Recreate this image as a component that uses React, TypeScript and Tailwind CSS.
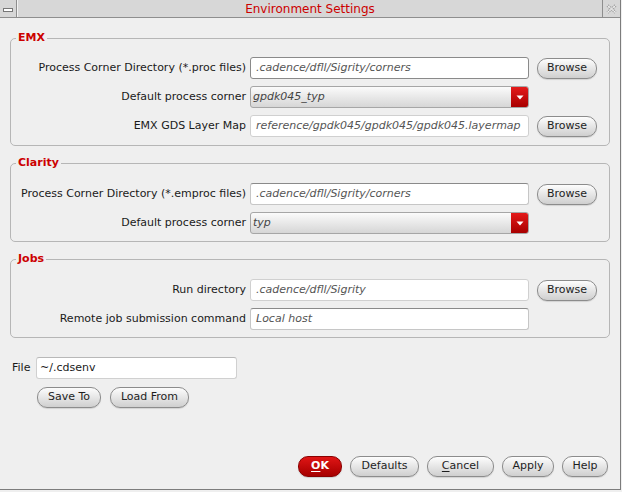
import React from 'react';

type FieldProps = { value: string; tone?: 'dark' | 'light' | 'top' };

function Field({ value, tone = 'light' }: FieldProps) {
  const border =
    tone === 'dark'
      ? 'border-[#8a8a8a]'
      : tone === 'top'
        ? 'border-[#c6c6c6] border-t-[#8a8a8a]'
        : 'border-[#d0d0d0]';
  return (
    <div
      className={`w-[279px] h-[22px] flex items-center bg-white border rounded-[3px] pl-[5px] text-[11px] italic text-[#555] ${border}`}
    >
      {value}
    </div>
  );
}

function Select({ value }: { value: string }) {
  return (
    <div className="w-[279px] h-[22px] flex items-stretch border border-[#a6a6a6] rounded-[3px] bg-linear-to-b from-[#fbfbfb] to-[#d6d6d6] text-[11px] italic text-[#444]">
      <div className="flex-1 flex items-center pl-[2px]">{value}</div>
      <div className="w-[17px] flex items-center justify-center rounded-r-[2px] bg-linear-to-b from-[#e41a1a] to-[#a80000]">
        <svg width="8" height="5" viewBox="0 0 8 5">
          <path d="M0.5 0.5 L7.5 0.5 L4 4.5 Z" fill="#fff" />
        </svg>
      </div>
    </div>
  );
}

function Btn({ children, w }: { children: React.ReactNode; w: string }) {
  return (
    <button
      className={`${w} h-[21px] flex items-center justify-center rounded-[10px] border border-[#8c8c8c] bg-linear-to-b from-[#fdfdfd] to-[#cfcfcf] text-[11px] text-[#1e1e1e] shadow-[0_1px_1px_rgba(0,0,0,0.12)]`}
    >
      {children}
    </button>
  );
}

function Row({ label, children }: { label: string; children: React.ReactNode }) {
  return (
    <div className="flex items-center h-[22px]">
      <div className="w-[239px] pr-[4px] text-right text-[11px] text-[#1a1a1a] whitespace-nowrap">{label}</div>
      {children}
    </div>
  );
}

function Group({ title, pt, pb, mt, children }: { title: string; pt: string; pb: string; mt: string; children: React.ReactNode }) {
  return (
    <fieldset className={`${mt} ${pt} ${pb} border border-[#b6b6b6] rounded-[5px] flex flex-col gap-[7px]`}>
      <legend className="ml-[5px] px-[2px] text-[11px] leading-[14px] font-bold text-[#cc0000]">{title}</legend>
      {children}
    </fieldset>
  );
}

export default function App() {
  return (
    <div className="w-[622px] h-[492px] bg-[#efefef] font-['DejaVu_Sans',sans-serif]">
      <div className="w-[621px] h-[490px] flex flex-col border-r border-b border-[#7c7c7c]">
        {/* title bar */}
        <div className="h-[18px] flex border-b border-[#8e8e8e] bg-[#d7d7d7]">
          <div className="w-[17px] flex items-center justify-center border-r border-[#8e8e8e]">
            <div className="w-[10px] h-[4px] bg-white border border-[#777] mt-[3px]" />
          </div>
          <div className="flex-1 flex items-center justify-center border-l border-[#f2f2f2] text-[12px] text-[#cc0000]">
            Environment Settings
          </div>
          <div className="w-[18px] flex items-center justify-center border-l border-[#8e8e8e]">
            <svg width="11" height="10" viewBox="0 0 11 10">
              <path d="M1.5 1.5 L9.5 8.5 M9.5 1.5 L1.5 8.5" stroke="#a4a4a4" strokeWidth="3" strokeDasharray="1.5 1" />
              <path d="M1.5 1.5 L9.5 8.5 M9.5 1.5 L1.5 8.5" stroke="#f4f4f4" strokeWidth="1" />
            </svg>
          </div>
        </div>

        <div className="flex-1 flex flex-col px-[10px]">
          <Group title="EMX" mt="mt-[13px]" pt="pt-[12px]" pb="pb-[8px]">
            <Row label="Process Corner Directory (*.proc files)">
              <Field value=".cadence/dfll/Sigrity/corners" tone="dark" />
              <div className="ml-[8px]"><Btn w="w-[60px]">Browse</Btn></div>
            </Row>
            <Row label="Default process corner">
              <Select value="gpdk045_typ" />
            </Row>
            <Row label="EMX GDS Layer Map">
              <Field value="reference/gpdk045/gpdk045/gpdk045.layermap" />
              <div className="ml-[8px]"><Btn w="w-[60px]">Browse</Btn></div>
            </Row>
          </Group>

          <Group title="Clarity" mt="mt-[10px]" pt="pt-[13px]" pb="pb-[7px]">
            <Row label="Process Corner Directory (*.emproc files)">
              <Field value=".cadence/dfll/Sigrity/corners" tone="top" />
              <div className="ml-[8px]"><Btn w="w-[60px]">Browse</Btn></div>
            </Row>
            <Row label="Default process corner">
              <Select value="typ" />
            </Row>
          </Group>

          <Group title="Jobs" mt="mt-[10px]" pt="pt-[13px]" pb="pb-[7px]">
            <Row label="Run directory">
              <Field value=".cadence/dfll/Sigrity" />
              <div className="ml-[8px]"><Btn w="w-[60px]">Browse</Btn></div>
            </Row>
            <Row label="Remote job submission command">
              <Field value="Local host" tone="top" />
            </Row>
          </Group>

          <div className="mt-[19px] ml-[2px] flex items-center h-[22px]">
            <div className="w-[24px] text-[11px] text-[#1a1a1a]">File</div>
            <div className="w-[201px] h-[22px] flex items-center bg-white border border-[#d0d0d0] border-t-[#b8b8b8] rounded-[3px] pl-[3px] text-[11px] text-[#1a1a1a]">
              ~/.cdsenv
            </div>
          </div>
          <div className="mt-[8px] ml-[27px] flex gap-[9px]">
            <Btn w="w-[64px]">Save To</Btn>
            <Btn w="w-[79px]">Load From</Btn>
          </div>

          <div className="mt-auto mb-[12px] mr-[2px] flex justify-end gap-[8px]">
            <button className="w-[44px] h-[21px] flex items-center justify-center rounded-[10px] border border-[#8a0000] bg-linear-to-b from-[#e01515] to-[#a60000] text-[11px] font-bold text-white shadow-[0_1px_1px_rgba(0,0,0,0.15)]">
              <span className="underline underline-offset-2">O</span>K
            </button>
            <Btn w="w-[69px]">Defaults</Btn>
            <Btn w="w-[67px]">
              <span className="underline underline-offset-2">C</span>ancel
            </Btn>
            <Btn w="w-[52px]">Apply</Btn>
            <Btn w="w-[46px]">Help</Btn>
          </div>
        </div>
      </div>
    </div>
  );
}
